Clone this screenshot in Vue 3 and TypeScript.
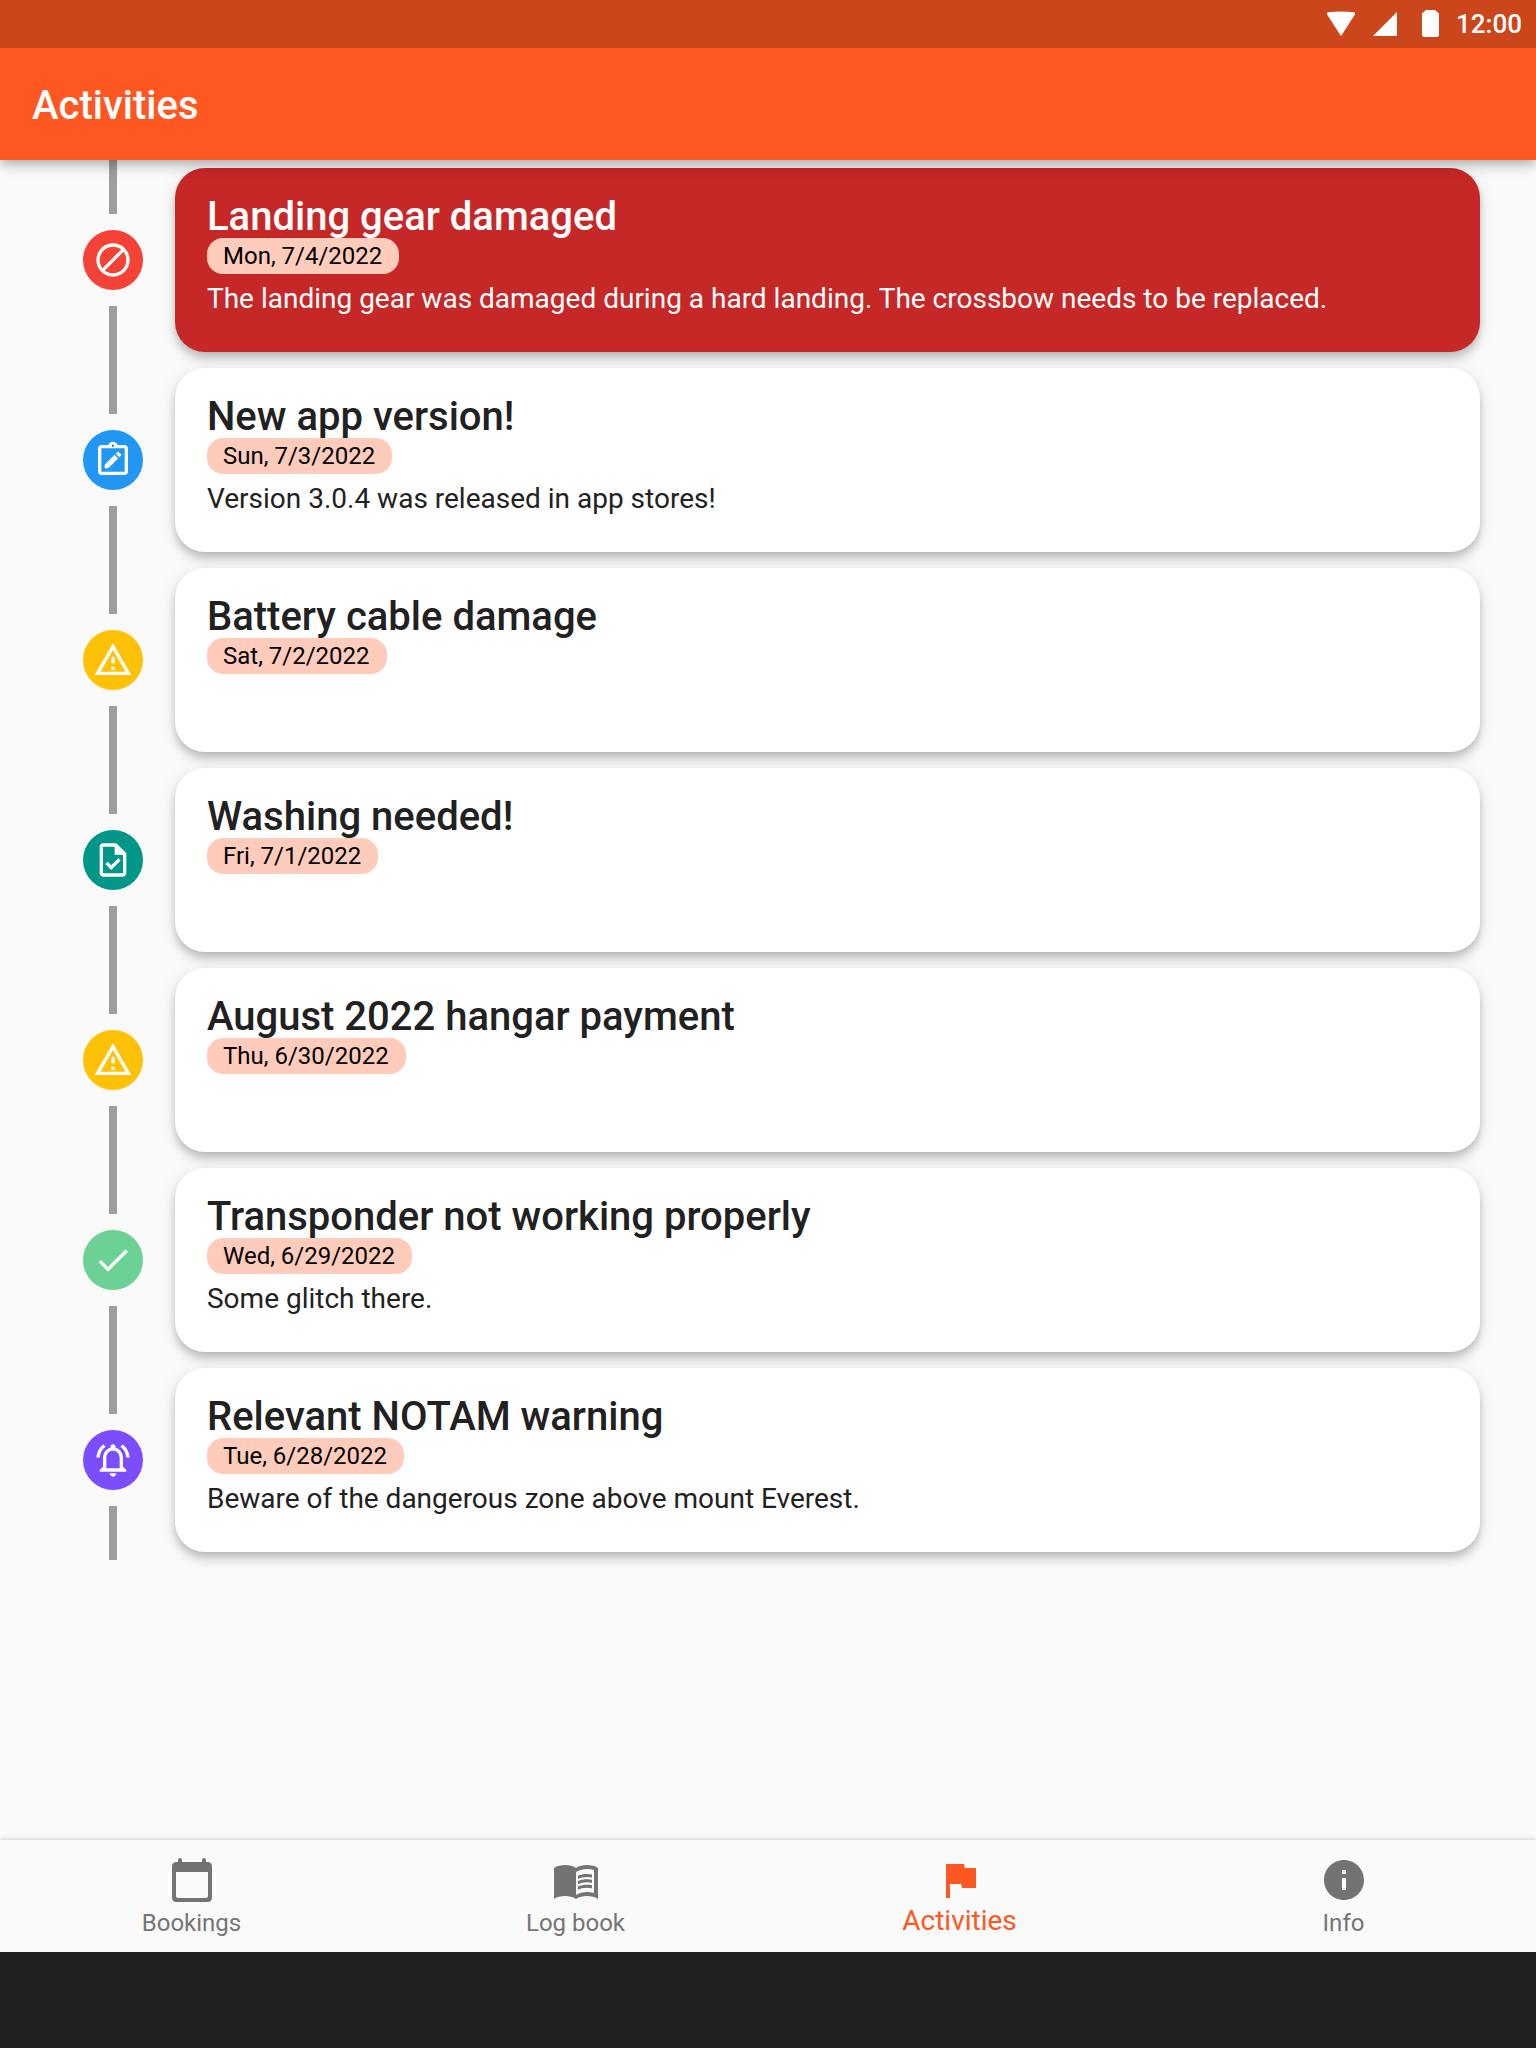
<script setup lang="ts">
interface Activity {
  title: string
  date: string
  text?: string
  color: string
  icon: string
  alert?: boolean
}

interface Tab {
  label: string
  icon: string
  active?: boolean
}

const warning =
  'M12 5.99L19.53 19H4.47L12 5.99M12 2L1 21h22L12 2zm1 14h-2v2h2v-2zm0-6h-2v4h2v-4z'

const activities: Activity[] = [
  {
    title: 'Landing gear damaged',
    date: 'Mon, 7/4/2022',
    text: 'The landing gear was damaged during a hard landing. The crossbow needs to be replaced.',
    color: '#f44336',
    icon: 'M12 2C6.5 2 2 6.5 2 12s4.5 10 10 10 10-4.5 10-10S17.5 2 12 2zM4 12c0-4.4 3.6-8 8-8 1.8 0 3.5.6 4.9 1.7L5.7 16.9C4.6 15.5 4 13.8 4 12zm8 8c-1.8 0-3.5-.6-4.9-1.7L18.3 7.1C19.4 8.5 20 10.2 20 12c0 4.4-3.6 8-8 8z',
    alert: true,
  },
  {
    title: 'New app version!',
    date: 'Sun, 7/3/2022',
    text: 'Version 3.0.4 was released in app stores!',
    color: '#2196f3',
    icon: 'M19 3h-4.18C14.4 1.84 13.3 1 12 1s-2.4.84-2.82 2H5c-1.1 0-2 .9-2 2v14c0 1.1.9 2 2 2h14c1.1 0 2-.9 2-2V5c0-1.1-.9-2-2-2zm-7-.25c.41 0 .75.34.75.75s-.34.75-.75.75-.75-.34-.75-.75.34-.75.75-.75zM19 19H5V5h14v14zM7 14.86V17h2.14l5.96-5.96-2.14-2.14L7 14.86zM16.85 9.29a.5.5 0 0 0 0-.71l-1.43-1.43a.5.5 0 0 0-.71 0l-1.04 1.04 2.14 2.14 1.04-1.04z',
  },
  { title: 'Battery cable damage', date: 'Sat, 7/2/2022', color: '#ffc107', icon: warning },
  {
    title: 'Washing needed!',
    date: 'Fri, 7/1/2022',
    color: '#009688',
    icon: 'M14 2H6c-1.1 0-1.99.9-1.99 2L4 20c0 1.1.89 2 1.99 2H18c1.1 0 2-.9 2-2V8l-6-6zm4 18H6V4h7v5h5v11zm-9.18-6.95L7.4 14.46 10.94 18l5.66-5.66-1.41-1.41-4.24 4.24-2.13-2.12z',
  },
  { title: 'August 2022 hangar payment', date: 'Thu, 6/30/2022', color: '#ffc107', icon: warning },
  {
    title: 'Transponder not working properly',
    date: 'Wed, 6/29/2022',
    text: 'Some glitch there.',
    color: '#6bd194',
    icon: 'M9 16.17L4.83 12l-1.42 1.41L9 19 21 7l-1.41-1.41z',
  },
  {
    title: 'Relevant NOTAM warning',
    date: 'Tue, 6/28/2022',
    text: 'Beware of the dangerous zone above mount Everest.',
    color: '#7c4dff',
    icon: 'M12 22c1.1 0 2-.9 2-2h-4c0 1.1.9 2 2 2zm6-6v-5c0-3.07-1.63-5.64-4.5-6.32V4c0-.83-.67-1.5-1.5-1.5s-1.5.67-1.5 1.5v.68C7.64 5.36 6 7.92 6 11v5l-2 2v1h16v-1l-2-2zm-2 1H8v-6c0-2.48 1.51-4.5 4-4.5s4 2.02 4 4.5v6zM7.58 4.08L6.15 2.65C3.75 4.48 2.17 7.3 2.03 10.5h2c.15-2.65 1.51-4.97 3.55-6.42zm12.39 6.42h2c-.15-3.2-1.73-6.02-4.12-7.85l-1.42 1.43c2.02 1.45 3.39 3.77 3.54 6.42z',
  },
]

const tabs: Tab[] = [
  {
    label: 'Bookings',
    icon: 'M20 3h-1V2c0-.55-.45-1-1-1s-1 .45-1 1v1H7V2c0-.55-.45-1-1-1s-1 .45-1 1v1H4c-1.1 0-2 .9-2 2v16c0 1.1.9 2 2 2h16c1.1 0 2-.9 2-2V5c0-1.1-.9-2-2-2zm-1 18H5c-.55 0-1-.45-1-1V8h16v12c0 .55-.45 1-1 1z',
  },
  {
    label: 'Log book',
    icon: 'M17.5 4.5c-1.95 0-4.05.4-5.5 1.5-1.45-1.1-3.55-1.5-5.5-1.5S2.45 4.9 1 6v15.5C2.45 20.4 4.55 20 6.5 20s4.05.4 5.5 1.5c1.45-1.1 3.55-1.5 5.5-1.5s4.05.4 5.5 1.5V6c-1.45-1.1-3.55-1.5-5.5-1.5zM21 18.5c-1.1-.35-2.3-.5-3.5-.5-1.7 0-4.15.65-5.5 1.5V8c1.35-.85 3.8-1.5 5.5-1.5 1.2 0 2.4.15 3.5.5v11.5zM17.5 10.5c.88 0 1.73.09 2.5.26V9.24c-.79-.15-1.64-.24-2.5-.24-1.7 0-3.24.29-4.5.83v1.66c1.13-.64 2.7-.99 4.5-.99zM13 12.49v1.66c1.13-.64 2.7-.99 4.5-.99.88 0 1.73.09 2.5.26V11.9c-.79-.15-1.64-.24-2.5-.24-1.7 0-3.24.3-4.5.83zM17.5 14.33c-1.7 0-3.24.29-4.5.83v1.66c1.13-.64 2.7-.99 4.5-.99.88 0 1.73.09 2.5.26v-1.52c-.79-.16-1.64-.24-2.5-.24z',
  },
  { label: 'Activities', icon: 'M14.4 6L14 4H5v17h2v-7h5.6l.4 2h7V6z', active: true },
  {
    label: 'Info',
    icon: 'M12 2C6.48 2 2 6.48 2 12s4.48 10 10 10 10-4.48 10-10S17.52 2 12 2zm1 15h-2v-6h2v6zm0-8h-2V7h2v2z',
  },
]
</script>

<template>
  <div class="screen">
    <header class="header">
      <div class="status">
        <svg class="wifi" width="30" height="26" viewBox="0 0 30 26">
          <path d="M1 2.2Q1 1.4 2 1.2Q15 0 28 1.2Q29 1.4 29 2.2L28.6 4L15.6 24.3Q15 25 14.4 24.3L1.4 4Z" />
        </svg>
        <svg class="signal" width="24" height="24" viewBox="0 0 24 24"><path d="M24 0V24H0Z" /></svg>
        <svg class="battery" width="17" height="27" viewBox="0 0 17 27">
          <path d="M4 0H13L17 3.5V24.5Q17 27 14.5 27H2.5Q0 27 0 24.5V3.5Z" />
        </svg>
        <span class="clock">12:00</span>
      </div>
      <h1 class="app-title">Activities</h1>
    </header>

    <main class="timeline">
      <section v-for="item in activities" :key="item.title" class="row">
        <div class="rail">
          <span class="line"></span>
          <span class="dot" :style="{ background: item.color }">
            <svg width="40" height="40" viewBox="0 0 24 24"><path fill-rule="evenodd" :d="item.icon" /></svg>
          </span>
          <span class="line"></span>
        </div>
        <article class="card" :class="{ alert: item.alert }">
          <h2 class="title">{{ item.title }}</h2>
          <span class="date">{{ item.date }}</span>
          <p v-if="item.text" class="text">{{ item.text }}</p>
        </article>
      </section>
    </main>

    <nav class="nav">
      <div v-for="tab in tabs" :key="tab.label" class="tab" :class="{ active: tab.active }">
        <svg width="48" height="48" viewBox="0 0 24 24"><path :d="tab.icon" /></svg>
        <span class="label">{{ tab.label }}</span>
      </div>
    </nav>
    <div class="system-bar"></div>
  </div>
</template>

<style>
body {
  margin: 0;
}
</style>

<style scoped>
.screen {
  display: flex;
  flex-direction: column;
  width: 1536px;
  height: 2048px;
  overflow: hidden;
  background: #fafafa;
  color: #212121;
  font-family: Roboto, 'Liberation Sans', sans-serif;
}

.header {
  position: relative;
  z-index: 2;
  flex: none;
  height: 160px;
  background: #ff5722;
  color: #fff;
  box-shadow: 0 4px 8px -2px rgba(0, 0, 0, 0.16), 0 8px 10px 0 rgba(0, 0, 0, 0.12),
    0 2px 20px 0 rgba(0, 0, 0, 0.08);
}

.status {
  display: flex;
  align-items: flex-start;
  justify-content: flex-end;
  box-sizing: border-box;
  height: 48px;
  padding-right: 14px;
  background: #cc461b;
  fill: #fff;
}

.wifi {
  margin: 11px 17px 0 0;
}

.signal {
  margin: 12px 25px 0 0;
}

.battery {
  margin: 10px 17px 0 0;
}

.clock {
  font-size: 26px;
  line-height: 48px;
  font-weight: 500;
}

.app-title {
  margin: 0;
  padding-left: 32px;
  font-size: 40px;
  font-weight: 500;
  line-height: 115px;
}

.timeline {
  display: flex;
  flex: 1;
  flex-direction: column;
  min-height: 0;
}

.row {
  display: flex;
  flex: none;
  height: 200px;
}

.rail {
  display: flex;
  flex-direction: column;
  align-items: center;
  gap: 16px;
  width: 60px;
  margin: 0 32.33px 0 82.67px;
}

.line {
  flex: 1;
  width: 8px;
  background: #9e9e9e;
}

.dot {
  display: flex;
  align-items: center;
  justify-content: center;
  width: 60px;
  height: 60px;
  border-radius: 50%;
  fill: #fff;
}

.card {
  display: flex;
  flex-direction: column;
  align-items: flex-start;
  box-sizing: border-box;
  width: 1305px;
  height: 184px;
  margin-top: 8px;
  padding: 24px 32px;
  border-radius: 30px;
  background: #fff;
  box-shadow: 0 4px 8px -2px rgba(0, 0, 0, 0.16), 0 8px 10px 0 rgba(0, 0, 0, 0.12),
    0 2px 20px 0 rgba(0, 0, 0, 0.08);
}

.card.alert {
  background: #c62828;
  color: #fff;
}

.title {
  height: 46px;
  margin: 0;
  font-size: 40px;
  font-weight: 500;
  line-height: 49px;
}

.date {
  position: relative;
  height: 36px;
  padding: 0 17px 0 16px;
  border-radius: 16px;
  background: #ffccbc;
  color: #000;
  font-size: 24px;
  line-height: 36px;
}

.text {
  margin: 8px 0 0;
  font-size: 28px;
  line-height: 33px;
}

.nav {
  position: relative;
  display: flex;
  flex: none;
  height: 112px;
  background: #fafafa;
  box-shadow: 0 -2px 4px rgba(0, 0, 0, 0.12);
}

.tab {
  display: flex;
  flex: 1;
  flex-direction: column;
  align-items: center;
  padding-top: 16px;
  color: #757575;
  fill: #737373;
}

.tab.active {
  color: #ff5722;
  fill: #ff5722;
}

.label {
  margin: 5px 1px 0 0;
  font-size: 24px;
  line-height: 28px;
}

.active .label {
  margin-top: 0;
  font-size: 28px;
  line-height: 33px;
}

.system-bar {
  flex: none;
  height: 96px;
  background: #212121;
}
</style>
